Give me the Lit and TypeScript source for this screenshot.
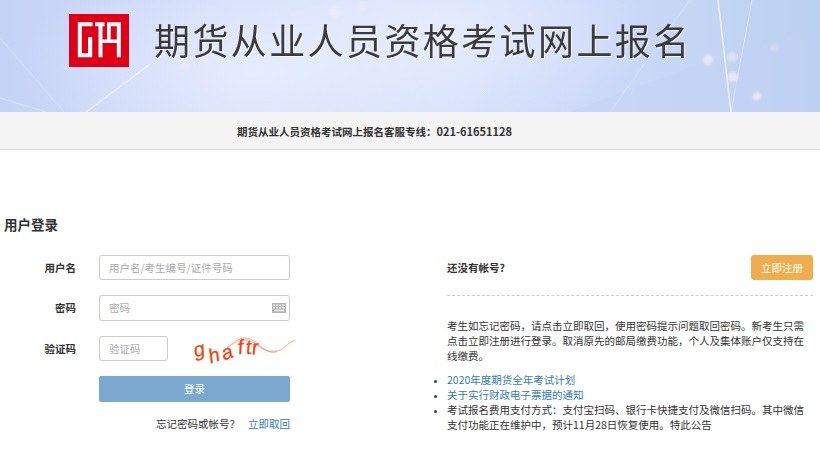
import { LitElement, html, css, svg } from "lit";
import { customElement } from "lit/decorators.js";

const logo = svg`<svg class="logo" viewBox="0 0 60 53" width="60" height="53" aria-hidden="true">
  <rect width="60" height="53" fill="#df0018"/>
  <path fill="#fff" d="M8.800 8.300H23.500V12.300H12.800V39.300H19V23H23.200V43.300H8.800Z"/>
  <path fill="#fff" d="M26 8.300H35.500V12.300H33.500V43.300H29.500V12.300H26Z"/>
  <path fill="#fff" d="M38 8.300H51.800V43.300H47.800V29H31V25.500H38ZM41.700 12.300V25.500H47.800V12.300Z" fill-rule="evenodd"/>
</svg>`;

const keyboard = svg`<svg class="kbd" viewBox="0 0 14 10" width="14" height="10" aria-hidden="true">
  <rect width="14" height="10" fill="#b4b4b4"/>
  <path fill="#f2f2f2" d="M1 1.500h2v1.500H1zM4 1.500h2v1.500H4zM7 1.500h2v1.500H7zM10 1.500h3v1.500h-3zM1 4h2v1.500H1zM4 4h2v1.500H4zM7 4h2v1.500H7zM10 4h3v1.500h-3zM2 6.800h10v1.400H2z"/>
</svg>`;

const captcha = svg`<svg class="captcha" viewBox="0 0 106 34" width="106" height="34" aria-hidden="true">
  <g fill="none" stroke="#f4623a" stroke-width="0.7" opacity="0.75">
    <path d="M35 16C44 8 50 4 58 7S72 21 82 20 94 11 103 8.500"/>
    <path d="M38 14C47 8 52 7 60 10S74 22 84 20" opacity="0.7"/>
    <path d="M46 8C54 5 60 9 66 14S78 20 86 18" opacity="0.6"/>
  </g>
  <g class="cap-t">
    <text x="2" y="24" transform="rotate(-14 8 20)">g</text>
    <text x="16" y="30" transform="rotate(-18 22 22)">h</text>
    <text x="30" y="27" transform="rotate(-20 35 22)">a</text>
    <text x="46" y="22" transform="rotate(-8 48 17)">f</text>
    <text x="54" y="22" transform="rotate(-6 56 17)">t</text>
    <text x="60" y="22" transform="rotate(-6 64 17)">r</text>
  </g>
</svg>`;

@customElement("app-root")
export class AppRoot extends LitElement {
  static styles = css`
    :host {
      display: block;
      width: 820px;
      height: 451px;
      overflow: hidden;
      background: #fff;
      color: #333;
      font-family: "Noto Sans CJK SC", "Liberation Sans", sans-serif;
      font-size: 10.500px;
    }
    .banner {
      position: relative;
      height: 112px;
      overflow: hidden;
      background:
        radial-gradient(ellipse 240px 120px at 260px 70px, rgba(236,241,255,.8), transparent),
        radial-gradient(ellipse 200px 100px at 450px 30px, rgba(235,240,255,.7), transparent),
        linear-gradient(90deg, #c5d3f6 0%, #d2dcfa 30%, #d6e0fb 55%, #cbd9f8 75%, #bcd0f0 100%);
    }
    .rays {
      position: absolute;
      inset: 0;
    }
    .blobs { filter: blur(1.500px); }
    .brand {
      position: relative;
      display: flex;
      align-items: flex-start;
      padding: 14px 0 0 68.500px;
      gap: 25.500px;
    }
    .logo { display: block; flex: none; }
    h1 {
      margin: 3px 0 0;
      font-size: 36px;
      line-height: 44px;
      font-weight: 400;
      letter-spacing: 2.400px;
      color: #3b3b3b;
      white-space: nowrap;
      text-shadow: 1px 1px 0 rgba(255,255,255,.75);
    }
    .service {
      background: #f4f4f4;
      border-bottom: 1px solid #dcdcdc;
      display: flex;
      align-items: center;
      justify-content: center;
      padding: 1px 71px 0 0;
      height: 36px;
      font-weight: 700;
      color: #333;
      white-space: nowrap;
    }
    .phone { font-size: 11px; }
    .main {
      display: grid;
      grid-template-columns: 447px 366px;
      padding-top: 66px;
    }
    .login { padding-left: 4px; }
    h2 {
      margin: 0 0 23px;
      font-size: 13.500px;
      line-height: 16px;
      font-weight: 700;
      color: #333;
    }
    .form {
      display: grid;
      grid-template-columns: 72px 191px;
      column-gap: 23px;
      row-gap: 15px;
      width: 286px;
      align-items: center;
    }
    label {
      text-align: right;
      font-weight: 700;
      color: #333;
      line-height: 14px;
    }
    .field {
      position: relative;
      box-sizing: border-box;
      height: 25px;
      border: 1px solid #ccc;
      border-radius: 3px;
      background: #fff;
      display: flex;
      align-items: center;
      padding-left: 9px;
      color: #aaa;
      white-space: nowrap;
    }
    .field.tall { height: 26px; padding-bottom: 1px; }
    .kbd { position: absolute; right: 3px; top: 7px; }
    .captcha-row {
      display: flex;
      align-items: center;
      gap: 24px;
      height: 25px;
    }
    .captcha-row .field { width: 69px; flex: none; }
    .captcha { display: block; flex: none; }
    .cap-t {
      font: italic 20px "Liberation Sans", sans-serif;
      fill: #f0450f;
      stroke: #f0450f;
      stroke-width: 0.300px;
    }
    .btn {
      box-sizing: border-box;
      height: 26px;
      padding-bottom: 1px;
      background: #7aa8cf;
      border-radius: 2px;
      color: #fff;
      display: flex;
      align-items: center;
      justify-content: center;
    }
    .forgot {
      display: flex;
      justify-content: flex-end;
      gap: 8px;
      line-height: 14px;
      white-space: nowrap;
    }
    a { color: #337ab7; text-decoration: none; }
    .reg-head {
      display: flex;
      align-items: center;
      justify-content: space-between;
      height: 25px;
      margin-top: 39px;
      padding-bottom: 15px;
      border-bottom: 1px dashed #ccc;
    }
    .reg-head b { font-weight: 700; }
    .reg {
      width: 62px;
      height: 25px;
      border-radius: 3px;
      background: #f0ad4e;
      color: #fff;
      display: flex;
      align-items: center;
      justify-content: center;
    }
    p {
      margin: 22px 0 0;
      line-height: 15px;
      color: #333;
      width: 362px;
    }
    ul {
      margin: 9px 0 0;
      padding: 0;
      list-style: disc;
      line-height: 15px;
      width: 362px;
    }
    li { color: #333; }
    li::marker { color: #24466b; font-size: 9px; }
  `;

  render() {
    return html`
      <header class="banner">
        <svg class="rays" width="820" height="112" viewBox="0 0 820 112" aria-hidden="true">
          <path d="M570 112L710 60L820 30V112Z" fill="#c3d2f5" opacity=".4"/>
          <g fill="none" stroke="#fff">
            <path d="M0 38L64 112" opacity=".2"/>
            <path d="M0 98L46 112" opacity=".2"/>
            <path d="M86 112L150 64" stroke-width="2" opacity=".35"/>
            <path d="M718 0L731 112" stroke-width="1.500" opacity=".65"/>
            <path d="M752 0L731 112" opacity=".35"/>
            <path d="M610 112L690 0" opacity=".2"/>
          </g>
          <g class="blobs" fill="#fdf1f4">
            <circle cx="708" cy="60" r="5" opacity=".7"/>
            <circle cx="732" cy="57" r="5" opacity=".45"/>
            <circle cx="733" cy="77" r="5" opacity=".7"/>
            <circle cx="757" cy="96" r="4" opacity=".7"/>
            <circle cx="775" cy="48" r="4" opacity=".3"/>
            <circle cx="335" cy="12" r="6" opacity=".3"/>
            <circle cx="363" cy="7" r="5" opacity=".25"/>
            <circle cx="185" cy="65" r="6" opacity=".25"/>
          </g>
        </svg>
        <div class="brand">${logo}<h1>期货从业人员资格考试网上报名</h1></div>
      </header>
      <div class="service"><span>期货从业人员资格考试网上报名客服专线：<span class="phone">021-61651128</span></span></div>
      <main class="main">
        <section class="login">
          <h2>用户登录</h2>
          <div class="form">
            <label>用户名</label>
            <div class="field">用户名/考生编号/证件号码</div>
            <label>密码</label>
            <div class="field tall">密码${keyboard}</div>
            <label>验证码</label>
            <div class="captcha-row"><div class="field">验证码</div>${captcha}</div>
            <span></span>
            <div class="btn">登录</div>
            <span></span>
            <div class="forgot"><span>忘记密码或帐号？</span><a>立即取回</a></div>
          </div>
        </section>
        <section>
          <div class="reg-head"><b>还没有帐号?</b><div class="reg">立即注册</div></div>
          <p>考生如忘记密码，请点击立即取回，使用密码提示问题取回密码。新考生只需点击立即注册进行登录。取消原先的邮局缴费功能，个人及集体账户仅支持在线缴费。</p>
          <ul>
            <li><a>2020年度期货全年考试计划</a></li>
            <li><a>关于实行财政电子票据的通知</a></li>
            <li>考试报名费用支付方式：支付宝扫码、银行卡快捷支付及微信扫码。其中微信支付功能正在维护中，预计11月28日恢复使用。特此公告</li>
          </ul>
        </section>
      </main>
    `;
  }
}
